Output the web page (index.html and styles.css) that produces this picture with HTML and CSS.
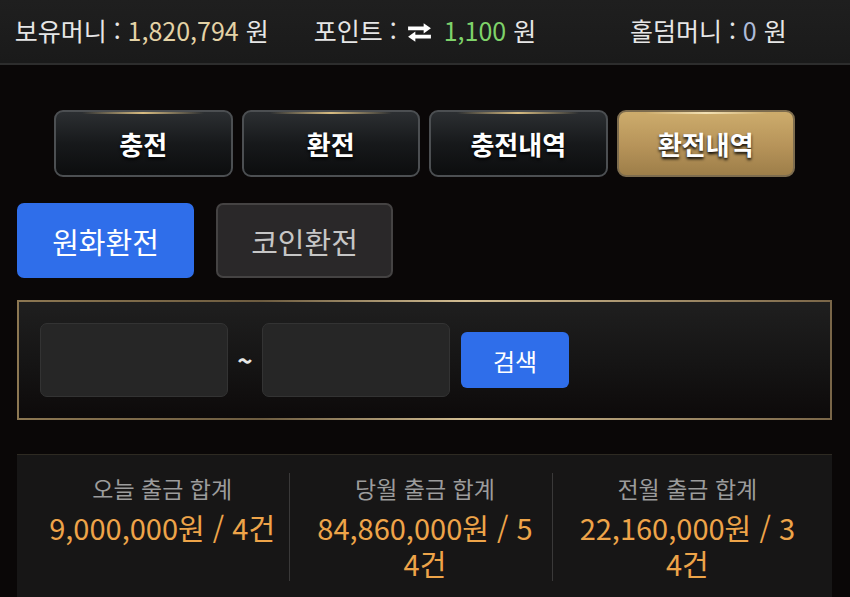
FILE: index.html
```html
<!DOCTYPE html>
<html lang="ko">
<head>
  <meta charset="UTF-8" />
  <meta name="viewport" content="width=device-width, initial-scale=1" />
  <title>환전내역</title>
  <link rel="stylesheet" href="styles.css">
</head>
<body>
  <!-- Balance bar -->
  <header class="topbar">
    <div class="bal">보유머니 : <span class="num-cream">1,820,794</span> 원</div>
    <div class="bal">포인트 :
      <svg class="swap-icon" viewBox="0 0 26 20" aria-hidden="true">
        <path d="M2 4.2h15V1l7 5-7 5V7.8H2z" fill="#fff"/>
        <path d="M24 12.2H9V9l-7 5 7 5v-3.2h15z" fill="#fff"/>
      </svg>
      <span class="num-green">1,100</span> 원</div>
    <div class="bal">홀덤머니 : <span class="num-blue">0</span> 원</div>
  </header>

  <main class="content">
    <!-- Main tabs -->
    <nav class="tabs">
      <button class="tab-btn">충전</button>
      <button class="tab-btn">환전</button>
      <button class="tab-btn">충전내역</button>
      <button class="tab-btn active">환전내역</button>
    </nav>

    <!-- Currency type -->
    <div class="kinds">
      <button class="kind-btn active">원화환전</button>
      <button class="kind-btn">코인환전</button>
    </div>

    <!-- Date search -->
    <section class="search-box">
      <input class="date-input" type="text">
      <span class="tilde">~</span>
      <input class="date-input" type="text">
      <button class="search-btn">검색</button>
    </section>

    <!-- Totals -->
    <section class="summary">
      <div class="sum-col">
        <div class="sum-title">오늘 출금 합계</div>
        <div class="sum-value">9,000,000원 / 4건</div>
      </div>
      <div class="sum-col">
        <div class="sum-title">당월 출금 합계</div>
        <div class="sum-value">84,860,000원 / 54건</div>
      </div>
      <div class="sum-col">
        <div class="sum-title">전월 출금 합계</div>
        <div class="sum-value">22,160,000원 / 34건</div>
      </div>
    </section>
  </main>
</body>
</html>
```

FILE: styles.css
```css
/* Reset */
* {
  margin: 0;
  padding: 0;
  box-sizing: border-box;
}
html, body {
  width: 100%;
  height: 100%;
  overflow: hidden;
}
body {
  background: #0a0707;
  color: #fff;
  font-family: "Noto Sans CJK KR", "Noto Sans", sans-serif;
}
button, input {
  font-family: inherit;
}
/* Balance bar */
.topbar {
  display: grid;
  grid-template-columns: 1fr 1fr 1fr;
  align-items: center;
  height: 65px;
  background: linear-gradient(180deg, #1f1f1f, #1a1a1a);
  border-bottom: 2px solid #2d2d2d;
  font-size: 25px;
  color: #e6e6e6;
}
.bal {
  text-align: center;
  white-space: nowrap;
  padding-bottom: 4px;
}
.num-cream { color: #e4d3a6; }
.num-green { color: #7fd36a; }
.num-blue { color: #aebbd8; }
.swap-icon {
  width: 27px;
  height: 21px;
  vertical-align: -2px;
  margin: 0 4px 0 2px;
}
/* Page content */
.content {
  padding: 0 18px 0 17px;
}
/* Main tabs */
.tabs {
  display: grid;
  grid-template-columns: repeat(4, 1fr);
  gap: 9px;
  margin-top: 45px;
  padding: 0 37px;
}
.tab-btn {
  position: relative;
  height: 67px;
  border: 2px solid #4c4f52;
  border-radius: 9px;
  background: linear-gradient(180deg, #2c2f32 0%, #17191b 50%, #0c0d0e 100%);
  color: #fff;
  font-size: 26px;
  font-weight: 700;
  text-shadow: 0 2px 3px #000;
  cursor: pointer;
}
.tab-btn::before {
  content: "";
  position: absolute;
  top: 0;
  left: 15%;
  width: 70%;
  height: 2px;
  background: linear-gradient(90deg, transparent, #d9bd82 50%, transparent);
}
.tab-btn.active {
  border-color: #7d6c4e;
  background: linear-gradient(180deg, #cdac6c 0%, #b69359 55%, #9d7e49 100%);
}
.tab-btn.active::before {
  background: linear-gradient(90deg, transparent, #f3e1b4 50%, transparent);
}
/* Currency type */
.kinds {
  display: flex;
  gap: 22px;
  margin-top: 26px;
}
.kind-btn {
  width: 177px;
  height: 75px;
  border: 2px solid #454343;
  border-radius: 7px;
  background: #2a2829;
  color: #c6c6c6;
  font-size: 29px;
  cursor: pointer;
}
.kind-btn.active {
  border-color: #2f6eea;
  background: #2f6eea;
  color: #fff;
}
/* Date search */
.search-box {
  display: flex;
  align-items: center;
  height: 120px;
  margin-top: 22px;
  padding: 0 21px;
  border: 2px solid;
  border-image: linear-gradient(90deg, #8c7752, #6d5c40 30%, #d2bd92 55%, #7a6648 100%) 1;
  background: linear-gradient(180deg, #1f1f1f 0%, #141313 60%, #0d0a0a 100%);
}
.date-input {
  width: 188px;
  height: 74px;
  border: 1px solid #333;
  border-radius: 7px;
  background: #262626;
  color: #fff;
}
.tilde {
  width: 34px;
  text-align: center;
  font-size: 26px;
  font-weight: 700;
  line-height: 1;
  color: #e6e6e6;
}
.search-btn {
  width: 108px;
  height: 56px;
  margin-left: 11px;
  border: none;
  border-radius: 6px;
  background: #2f6eea;
  color: #fff;
  font-size: 24px;
  cursor: pointer;
}
/* Totals */
.summary {
  display: grid;
  grid-template-columns: repeat(3, 1fr);
  margin-top: 34px;
  padding: 18px 18px 30px 10px;
  background: #171616;
  border-top: 1px solid #2e2a22;
}
.sum-col {
  padding-left: 8px;
  text-align: center;
}
.sum-col + .sum-col {
  border-left: 1px solid #3a3939;
}
.sum-title {
  margin-bottom: 6px;
  font-size: 23px;
  line-height: 30px;
  color: #9c9c9c;
}
.sum-value {
  max-width: 226px;
  margin: 0 auto;
  font-size: 29px;
  line-height: 36px;
  color: #eea449;
  word-break: break-all;
}
```
